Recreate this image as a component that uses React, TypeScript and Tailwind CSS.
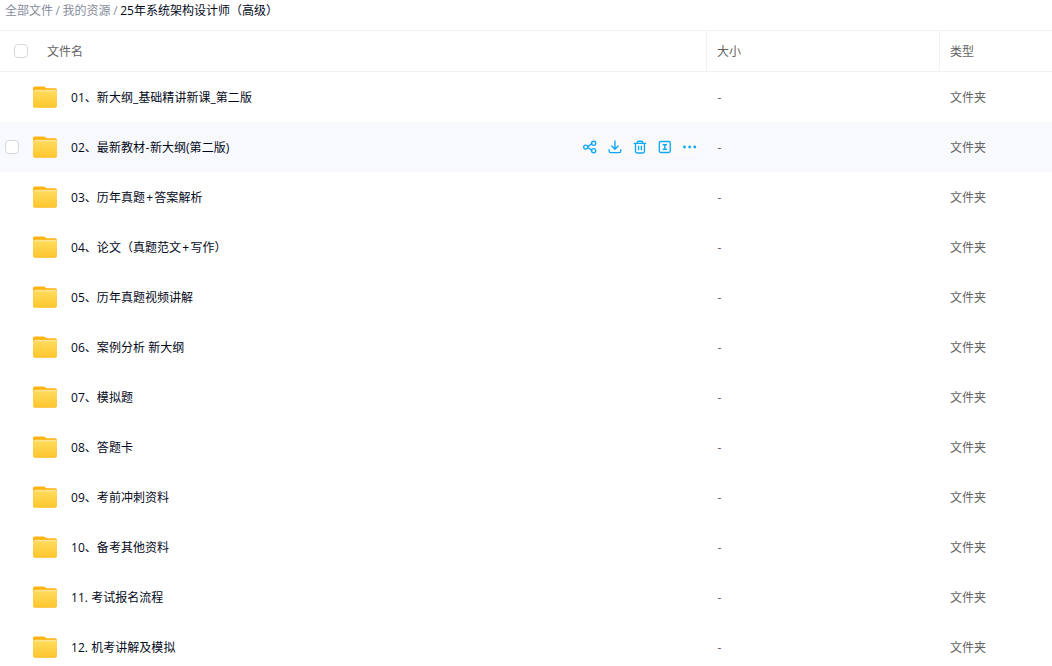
import type { ReactNode } from 'react';

const folders = [
  '01、新大纲_基础精讲新课_第二版',
  '02、最新教材-新大纲(第二版)',
  '03、历年真题+答案解析',
  '04、论文（真题范文+写作）',
  '05、历年真题视频讲解',
  '06、案例分析 新大纲',
  '07、模拟题',
  '08、答题卡',
  '09、考前冲刺资料',
  '10、备考其他资料',
  '11. 考试报名流程',
  '12. 机考讲解及模拟',
];

const ACTIVE_ROW = 1;

function FolderIcon() {
  return (
    <svg width="24" height="22" viewBox="0 0 24 22" className="shrink-0">
      <path d="M0 2.2Q0 .5 1.8.5h8.4c1.2 0 1.7.4 2.3 1.1.4.5 1 .7 1.7.7h7.6Q24 2.3 24 4.4V12H0z" fill="#ffb414" />
      <path d="M1.8 3.8h20.4Q24 3.8 24 5.6v13.9q0 2-2 2H2q-2 0-2-2V5.6q0-1.8 1.8-1.8z" fill="url(#folder)" />
      <path d="M2.4 4.2h19.2q1.2 0 1.4 1.1H1q.2-1.1 1.4-1.1z" fill="#ffe8a6" />
      <path d="M.4 20.2q.4 1.1 1.6 1.1h20q1.2 0 1.6-1.1" fill="none" stroke="#fdb91f" strokeWidth=".7" />
      <defs>
        <linearGradient id="folder" x1="0" y1="4" x2="0" y2="22" gradientUnits="userSpaceOnUse">
          <stop stopColor="#ffdc60" />
          <stop offset="1" stopColor="#ffc62c" />
        </linearGradient>
      </defs>
    </svg>
  );
}

function ActionIcon({ children }: { children: ReactNode }) {
  return (
    <svg width="14" height="14" viewBox="0 0 14 14" fill="none" stroke="#0fa8f8" strokeWidth="1.35" strokeLinecap="round" strokeLinejoin="round">
      {children}
    </svg>
  );
}

function RowActions() {
  return (
    <div className="flex h-[17px] w-[120px] items-center gap-[11.2px] bg-[#fafafa] pl-[5.6px]">
      {/* share */}
      <ActionIcon>
        <circle cx="2.7" cy="7.1" r="2" />
        <circle cx="10.7" cy="3.3" r="2.1" />
        <circle cx="10.7" cy="10.7" r="2.1" />
        <path d="M4.7 6.6c1.8-.2 2.2-2 4-2.7M4.7 7.6c1.8.2 2.2 1.8 4 2.5" />
      </ActionIcon>
      {/* download */}
      <ActionIcon>
        <path d="M7 .9v8.2M3.7 6.1 7 9.3l3.3-3.2M1.1 9.6v1.3q0 1.8 1.8 1.8h8.2q1.8 0 1.8-1.8V9.6" />
      </ActionIcon>
      {/* delete */}
      <ActionIcon>
        <path d="M1.2 3.3h11.6M4.3 3.1V2.5q0-1.3 1.3-1.3h2.8q1.3 0 1.3 1.3v.6M2.5 3.5v7.8q0 1.7 1.7 1.7h5.6q1.7 0 1.7-1.7V3.5M5.6 6.2v3.6M8.4 6.2v3.6" />
      </ActionIcon>
      {/* rename */}
      <ActionIcon>
        <rect x="1.3" y="1.5" width="11" height="11" rx="1.4" />
        <path d="M5.1 4.7h3.4M5.1 9.3h3.4M6.8 4.7v4.6" />
      </ActionIcon>
      {/* more */}
      <ActionIcon>
        <g fill="#0fa8f8" stroke="none">
          <circle cx="1.5" cy="7" r="1.4" />
          <circle cx="6.7" cy="7" r="1.4" />
          <circle cx="11.9" cy="7" r="1.4" />
        </g>
      </ActionIcon>
    </div>
  );
}

function Checkbox() {
  return <span className="size-[14px] shrink-0 rounded-[4px] border border-[#d7d8dc] bg-white" />;
}

// Connector signs inside a folder name get a little breathing room
function FolderName({ name }: { name: string }) {
  return (
    <span className="ml-[14px] flex-1 pt-[2px] whitespace-pre tracking-[0.04px] text-[#03081a]">
      {name.split(/([+-])/).map((part, i) =>
        part === '+' || part === '-' ? (
          <span key={i} className={part === '+' ? 'px-[1.2px]' : 'px-[0.5px]'}>{part}</span>
        ) : (
          part
        ),
      )}
    </span>
  );
}

function FolderRow({ name, active }: { name: string; active: boolean }) {
  return (
    <div className={`flex h-[50px] shrink-0 items-center ${active ? 'bg-[#f7f9fc]' : ''}`}>
      <div className="flex w-[706px] items-center">
        <div className="flex w-[33px] shrink-0 pl-[5px]">{active && <Checkbox />}</div>
        <FolderIcon />
        <FolderName name={name} />
        {active && (
          <div className="mr-[9px]">
            <RowActions />
          </div>
        )}
      </div>
      <span className="w-[233px] pt-[2px] pl-[11.5px] text-[#636363]">-</span>
      <span className="pt-[2px] pl-[11px] text-[#636363]">文件夹</span>
    </div>
  );
}

export default function App() {
  return (
    <div className="flex h-screen flex-col overflow-hidden bg-white font-['Open_Sans','Noto_Sans_CJK_SC',sans-serif] text-[12px] leading-[18px]">
      <nav className="flex h-[30px] shrink-0 items-start gap-[2.6px] pt-[2px] pl-[5px] text-[#878c9c]">
        <span>全部文件</span>
        <span>/</span>
        <span>我的资源</span>
        <span>/</span>
        <span className="text-[#03081a]">25年系统架构设计师（高级）</span>
      </nav>

      <div className="flex h-[42px] shrink-0 border-y border-[#f1f2f4] text-[#636363]">
        <div className="flex w-[706px] items-center pl-[14px]">
          <Checkbox />
          <span className="ml-[19px] pt-[2px]">文件名</span>
        </div>
        <div className="flex w-[233px] items-center border-l border-[#f1f2f4] pt-[2px] pl-[10px]">大小</div>
        <div className="flex flex-1 items-center border-l border-[#f1f2f4] pt-[2px] pl-[10px]">类型</div>
      </div>

      {folders.map((name, i) => (
        <FolderRow key={name} name={name} active={i === ACTIVE_ROW} />
      ))}
    </div>
  );
}
